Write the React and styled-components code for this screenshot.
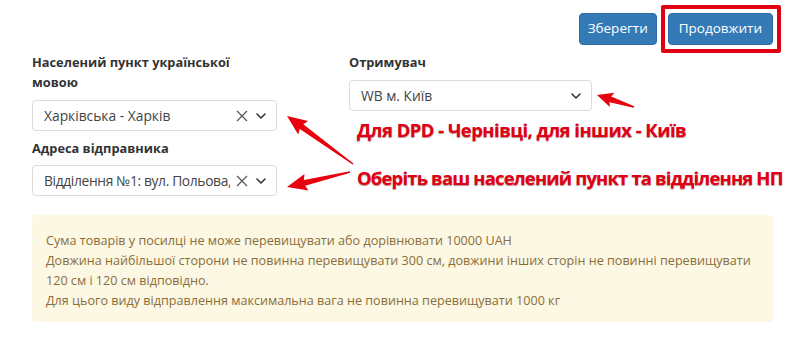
import React from "react";
import styled, { createGlobalStyle } from "styled-components";

const Global = createGlobalStyle`
  html, body { margin: 0; padding: 0; background: #fff; }
  body { font-family: "Open Sans", "Noto Sans", sans-serif; color: #333; }
  * { box-sizing: border-box; }
`;

const Page = styled.div`
  position: relative;
  width: 800px;
  height: 338px;
  padding: 5px 19px 0 32px;
  overflow: hidden;
`;

const Toolbar = styled.div`
  display: flex;
  justify-content: flex-end;
  align-items: center;
  gap: 4px;
`;

const Frame = styled.div`
  border: 4px solid #e00012;
  border-radius: 2px;
  padding: 4px 4px 4px 3px;
  display: flex;
`;

const Button = styled.button`
  height: 32px;
  padding: 0 ${(p) => p.$px || 9}px;
  border: 1px solid #2e6da4;
  border-radius: 4px;
  background: #337ab7;
  color: #fff;
  font-family: inherit;
  font-size: 13.5px;
  line-height: 1;
`;

const Form = styled.div`
  display: grid;
  grid-template-columns: 245px 243px;
  column-gap: 72px;
  margin-top: -1px;
`;

const Column = styled.div`
  display: flex;
  flex-direction: column;
`;

const Label = styled.div`
  font-weight: 700;
  font-size: 12.8px;
  line-height: 20px;
  color: #333;
  margin-top: ${(p) => p.$mt || 0}px;
  margin-bottom: ${(p) => p.$mb || 8}px;
`;

const Select = styled.div`
  display: flex;
  align-items: center;
  height: 31px;
  border: 1px solid #dcdcdc;
  border-radius: 4px;
  padding: 0 10px 0 11px;
  font-size: 13.8px;
  color: #444;
  background: #fff;
`;

const Value = styled.span`
  flex: 1;
  min-width: 0;
  white-space: nowrap;
  overflow: hidden;
  margin-right: 6px;
  letter-spacing: ${(p) => p.$ls || 0}px;
`;

const Icons = styled.span`
  display: flex;
  align-items: center;
  gap: 8px;
  color: #555;
`;

const Note = styled.div`
  margin-left: 8px;
  margin-top: ${(p) => p.$mt}px;
  white-space: nowrap;
  font-weight: 700;
  font-size: 18.5px;
  line-height: 24px;
  color: #e20015;
  text-shadow: 0 1px 1px rgba(80, 0, 0, 0.45);
  letter-spacing: ${(p) => p.$ls || -0.5}px;
`;

const Alert = styled.div`
  margin-top: 19px;
  width: 741px;
  background: #fcf8e3;
  border-radius: 4px;
  padding: 16px 14px 11px;
  color: #8a6d3b;
  font-size: 12.6px;
  line-height: 20px;
`;

const Line = styled.div``;

const Overlay = styled.svg`
  position: absolute;
  left: 0;
  top: 0;
  pointer-events: none;
`;

const Cross = () => (
  <svg width="12" height="12" viewBox="0 0 12 12">
    <path d="M1 1 L11 11 M11 1 L1 11" stroke="#555" strokeWidth="1.2" fill="none" />
  </svg>
);

const Chevron = () => (
  <svg width="10" height="6" viewBox="0 0 10 6">
    <path d="M1 1 L5 5 L9 1" stroke="#333" strokeWidth="1.6" fill="none" strokeLinecap="round" strokeLinejoin="round" />
  </svg>
);

function arrowPoints(tail, tip, headLen = 18, headW = 17, shaftW = 6) {
  const [tx, ty] = tail;
  const [px, py] = tip;
  const dx = px - tx;
  const dy = py - ty;
  const len = Math.hypot(dx, dy);
  const ux = dx / len;
  const uy = dy / len;
  const nx = -uy;
  const ny = ux;
  const bx = px - ux * headLen;
  const by = py - uy * headLen;
  const pts = [
    [tx + nx * 0.7, ty + ny * 0.7],
    [bx + nx * shaftW / 2, by + ny * shaftW / 2],
    [bx - ux * 2 + nx * headW / 2, by - uy * 2 + ny * headW / 2],
    [px, py],
    [bx - ux * 2 - nx * headW / 2, by - uy * 2 - ny * headW / 2],
    [bx - nx * shaftW / 2, by - ny * shaftW / 2],
    [tx - nx * 0.7, ty - ny * 0.7],
  ];
  return pts.map((p) => p.map((v) => v.toFixed(1)).join(",")).join(" ");
}

export default function App() {
  return (
    <Page>
      <Global />
      <Toolbar>
        <Button $px={8}>Зберегти</Button>
        <Frame>
          <Button $px={10}>Продовжити</Button>
        </Frame>
      </Toolbar>
      <Form>
        <Column>
          <Label>Населений пункт української мовою</Label>
          <Select>
            <Value>Харківська - Харків</Value>
            <Icons>
              <Cross />
              <Chevron />
            </Icons>
          </Select>
          <Label $mt={7} $mb={7}>Адреса відправника</Label>
          <Select>
            <Value $ls={-0.35}>Відділення №1: вул. Польова,</Value>
            <Icons>
              <Cross />
              <Chevron />
            </Icons>
          </Select>
        </Column>
        <Column>
          <Label>Отримувач</Label>
          <Select>
            <Value>WB м. Київ</Value>
            <Icons>
              <Chevron />
            </Icons>
          </Select>
          <Note $mt={7} $ls={-0.55}>Для DPD - Чернівці, для інших - Київ</Note>
          <Note $mt={24} $ls={-0.85}>Оберіть ваш населений пункт та відділення НП</Note>
        </Column>
      </Form>
      <Alert>
        <Line>Сума товарів у посилці не може перевищувати або дорівнювати 10000 UAH</Line>
        <Line>
          Довжина найбільшої сторони не повинна перевищувати 300 см, довжини інших сторін не повинні перевищувати
          <br />
          120 см і 120 см відповідно.
        </Line>
        <Line>Для цього виду відправлення максимальна вага не повинна перевищувати 1000 кг</Line>
      </Alert>
      <Overlay width="800" height="338" viewBox="0 0 800 338">
        <polygon points={arrowPoints([353, 164], [287, 116])} fill="#e8000f" />
        <polygon points={arrowPoints([350, 172], [287, 187])} fill="#e8000f" />
        <polygon points={arrowPoints([634, 107], [597, 95], 14, 15, 6)} fill="#e8000f" />
      </Overlay>
    </Page>
  );
}
